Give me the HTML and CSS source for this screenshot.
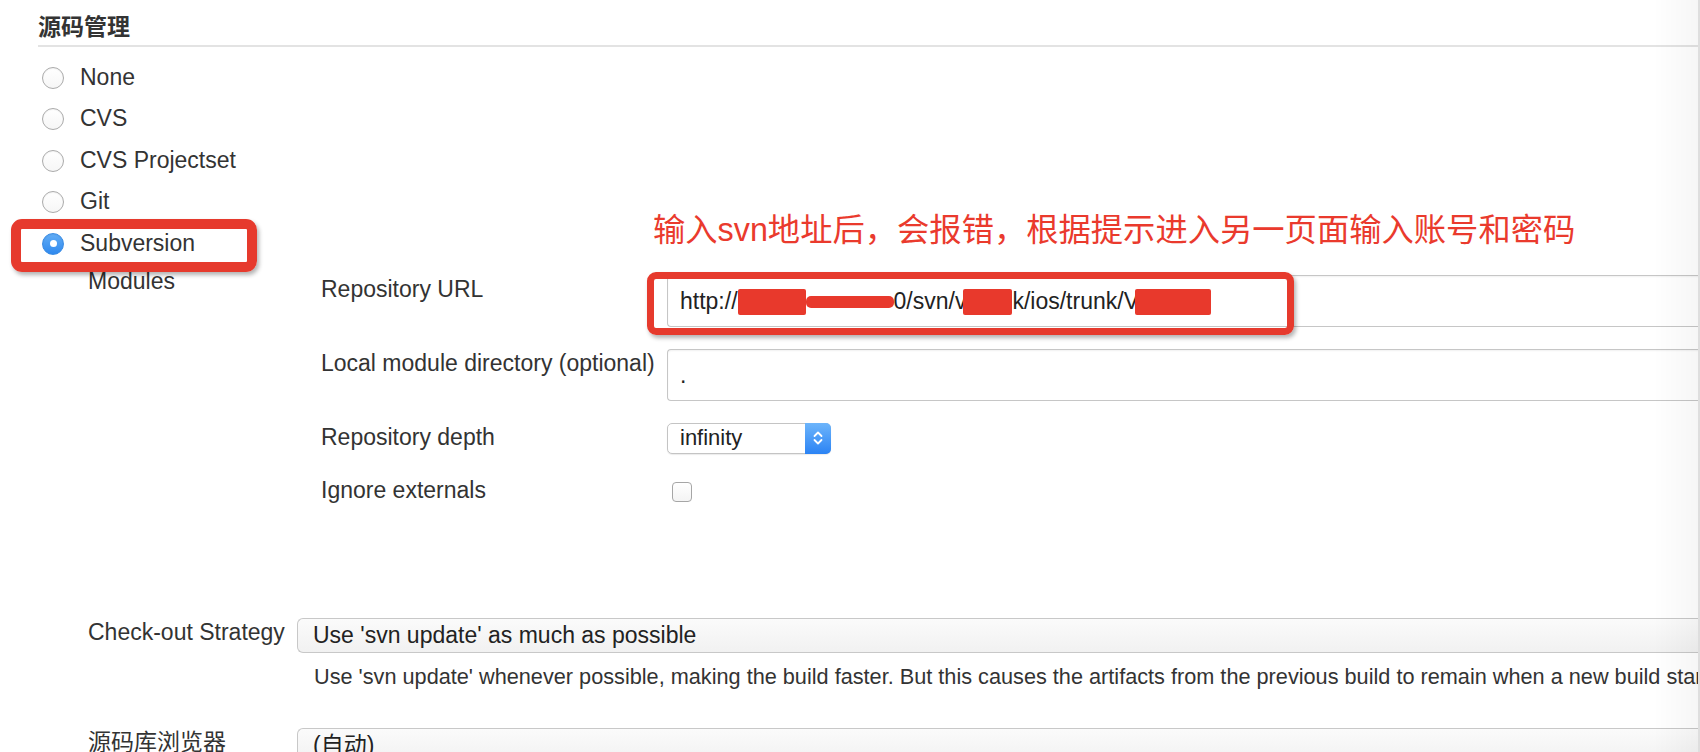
FILE: index.html
```html
<!DOCTYPE html>
<html lang="zh-CN">
<head>
<meta charset="utf-8">
<title>源码管理</title>
<link rel="stylesheet" href="styles.css">
</head>
<body>
<div class="page">
  <h2 class="section-title">源码管理</h2>
  <div class="annotation">输入svn地址后，会报错，根据提示进入另一页面输入账号和密码</div>

  <ul class="scm-options">
    <li class="scm-option"><span class="radio"></span><span class="opt-label">None</span></li>
    <li class="scm-option"><span class="radio"></span><span class="opt-label">CVS</span></li>
    <li class="scm-option"><span class="radio"></span><span class="opt-label">CVS Projectset</span></li>
    <li class="scm-option"><span class="radio"></span><span class="opt-label">Git</span></li>
    <li class="scm-option"><span class="radio checked"></span><span class="opt-label">Subversion</span><span class="mark-box option-mark"></span></li>
  </ul>

  <div class="scm-form">
    <div class="form-row">
      <div class="form-label modules-label">Modules</div>
      <div class="modules">
        <div class="field-label">Repository URL</div>
        <div class="field">
          <div class="textbox"><span class="tb-text">http://<span class="redact r1"></span><span class="redact r1b"></span>0/svn/v<span class="redact r2"></span>k/ios/trunk/V<span class="redact r3"></span></span><span class="mark-box url-mark"></span></div>
        </div>

        <div class="field-label">Local module directory (optional)</div>
        <div class="field">
          <div class="textbox"><span class="tb-text">.</span></div>
        </div>

        <div class="field-label">Repository depth</div>
        <div class="field">
          <div class="select-mac">
            <span class="select-value">infinity</span>
            <span class="stepper">
              <svg width="12" height="20" viewBox="0 0 12 20" aria-hidden="true"><path d="M2.5 8 L6 4.5 L9.5 8 M2.5 12 L6 15.5 L9.5 12" fill="none" stroke="#fff" stroke-width="1.8" stroke-linecap="round" stroke-linejoin="round"/></svg>
            </span>
          </div>
        </div>

        <div class="field-label">Ignore externals</div>
        <div class="field">
          <span class="checkbox"></span>
        </div>
      </div>
    </div>

    <div class="form-row strategy">
      <div class="form-label">Check-out Strategy</div>
      <div class="field">
        <div class="wide-select"><span>Use 'svn update' as much as possible</span></div>
        <div class="help">Use 'svn update' whenever possible, making the build faster. But this causes the artifacts from the previous build to remain when a new build starts.</div>
      </div>
    </div>

    <div class="form-row browser">
      <div class="form-label">源码库浏览器</div>
      <div class="field">
        <div class="wide-select"><span>(自动)</span></div>
      </div>
    </div>
  </div>
</div>
</body>
</html>
```

FILE: styles.css
```css
html, body {
  margin: 0;
  height: 100%;
  overflow: hidden;
  background: #fff;
}

body {
  font-family: "Liberation Sans", "Noto Sans CJK SC", sans-serif;
  font-size: 23px;
  color: #333;
}

body::after {
  content: "";
  position: fixed;
  top: 0;
  right: 0;
  width: 44px;
  height: 100%;
  background: linear-gradient(to right, rgba(0, 0, 0, 0), rgba(0, 0, 0, 0.035));
  border-right: 2px solid #dedede;
  pointer-events: none;
}

.page {
  position: relative;
  width: 100%;
  padding-left: 38px;
  box-sizing: border-box;
}

.section-title {
  margin: 0;
  padding: 12px 0 3px;
  font-size: 23px;
  line-height: 30px;
  font-weight: bold;
  color: #333;
  border-bottom: 2px solid #e3e3e3;
}

.annotation {
  position: absolute;
  left: 653px;
  top: 213px;
  font-size: 32.3px;
  line-height: 34px;
  color: #ea3a2d;
  white-space: nowrap;
  z-index: 3;
}

.scm-options {
  list-style: none;
  margin: 10px 0 0;
  padding: 0;
}

.scm-option {
  position: relative;
  height: 41.5px;
  display: flex;
  align-items: center;
  gap: 16px;
  padding-left: 4px;
  line-height: 26px;
  color: #333;
}

.opt-label {
  margin-top: -2px;
}

.radio {
  width: 22px;
  height: 22px;
  flex: none;
  box-sizing: border-box;
  border-radius: 50%;
  border: 1px solid #ababab;
  background: linear-gradient(#fff, #f6f6f6);
  box-shadow: inset 0 1px 1px rgba(0, 0, 0, 0.05);
}

.radio.checked {
  border-color: #3a8ce4;
  background: linear-gradient(#62adf6, #2f89ee);
  display: flex;
  align-items: center;
  justify-content: center;
}

.radio.checked::after {
  content: "";
  width: 7px;
  height: 7px;
  border-radius: 50%;
  background: #fff;
}

.mark-box {
  position: absolute;
  box-sizing: border-box;
  border: 10px solid #e63a2d;
  border-radius: 11px;
  box-shadow: 2px 3px 4px rgba(0, 0, 0, 0.3);
  pointer-events: none;
  z-index: 2;
}

.option-mark {
  left: -27px;
  top: -4px;
  width: 246px;
  height: 53px;
}

.url-mark {
  left: -21px;
  top: -4px;
  width: 647px;
  height: 63px;
  border-width: 7px;
  border-radius: 9px;
}

.scm-form {
  margin: 0 0 0 50px;
}

.form-row {
  display: grid;
  grid-template-columns: 209px 1fr;
  align-items: start;
}

.form-label,
.field-label {
  line-height: 28px;
  color: #333;
  white-space: nowrap;
}

.modules-label {
  padding-top: 2px;
}

.modules {
  display: grid;
  grid-template-columns: 346px 1fr;
  row-gap: 22px;
  align-items: start;
  padding: 10px 0 0 24px;
}

.field {
  min-width: 0;
}

.textbox {
  position: relative;
  height: 52px;
  box-sizing: border-box;
  border: 1px solid #c6c6c6;
  border-right: none;
  border-radius: 4px 0 0 4px;
  padding-left: 12px;
  line-height: 50px;
  white-space: nowrap;
  color: #222;
  background: #fff;
  box-shadow: inset 0 1px 2px rgba(0, 0, 0, 0.06);
}

.redact {
  display: inline-block;
  height: 26px;
  vertical-align: -6px;
  background: #e8392c;
  border-radius: 2px;
}

.r1 { width: 68px; }
.r1b { width: 88px; height: 12px; vertical-align: 1px; border-radius: 5px; }
.r2 { width: 49px; margin-left: -3px; }
.r3 { width: 76px; margin-left: -4px; }

.select-mac {
  width: 164px;
  height: 31px;
  box-sizing: border-box;
  display: flex;
  align-items: center;
  border: 1px solid #c4c4c4;
  border-radius: 5px;
  background: #fff;
  box-shadow: 0 1px 1px rgba(0, 0, 0, 0.08);
  font-size: 22px;
  color: #222;
}

.select-value {
  flex: 1;
  padding-left: 12px;
}

.stepper {
  align-self: stretch;
  width: 26px;
  margin: -1px -1px -1px 0;
  display: flex;
  align-items: center;
  justify-content: center;
  border-radius: 0 5px 5px 0;
  background: linear-gradient(#6db5fb, #2b83f4);
}

.checkbox {
  display: block;
  width: 20px;
  height: 20px;
  margin: 6px 0 0 5px;
  box-sizing: border-box;
  border: 1px solid #a6a6a6;
  border-radius: 4px;
  background: linear-gradient(#fff, #f4f4f4);
}

.strategy {
  margin-top: 114px;
}

.browser {
  margin-top: 38px;
}

.wide-select {
  height: 35px;
  box-sizing: border-box;
  border: 1px solid #c8c8c8;
  border-right: none;
  border-radius: 6px 0 0 6px;
  padding-left: 15px;
  line-height: 33px;
  white-space: nowrap;
  color: #222;
  background: linear-gradient(#fbfbfb, #f1f1f1);
}

.help {
  margin-top: 11px;
  padding-left: 17px;
  font-size: 21.7px;
  line-height: 26px;
  white-space: nowrap;
  overflow: hidden;
  color: #333;
}
```
